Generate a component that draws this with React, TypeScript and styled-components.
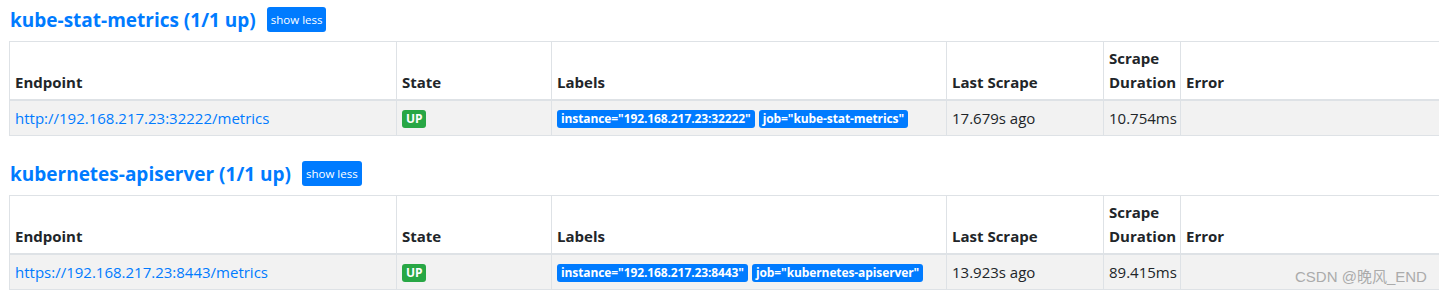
import styled, {createGlobalStyle} from 'styled-components';

const GlobalStyle = createGlobalStyle`
  body {
    margin: 0;
    background: #fff;
    font-family: "Open Sans", "Noto Sans", "Liberation Sans", sans-serif;
    color: #212529;
    overflow: hidden;
  }
`;

const Page = styled.div`
  position: relative;
  padding: 7px 0 0 9px;
  height: 293px;
  box-sizing: border-box;
`;

const Pool = styled.section`
  margin-bottom: 25px;
`;

const TitleRow = styled.div`
  display: flex;
  align-items: center;
  gap: 11px;
  height: 25px;
`;

const Title = styled.a`
  font-size: 19px;
  font-weight: 700;
  color: #007bff;
  text-decoration: none;
  padding-left: 1px;
`;

const SmallButton = styled.button`
  height: 25px;
  padding: 0 4px;
  border: none;
  border-radius: 3px;
  background: #007bff;
  color: #fff;
  font-family: inherit;
  font-size: 11.5px;
`;

const Table = styled.table`
  margin-top: 9px;
  width: 1430px;
  table-layout: fixed;
  border-collapse: collapse;
  font-size: 15px;
  line-height: 24px;

  th,
  td {
    border: 1px solid #dee2e6;
    text-align: left;
    overflow: hidden;
    white-space: nowrap;
  }

  th {
    padding: 4px 5px 5px;
    vertical-align: bottom;
    font-weight: 700;
    white-space: normal;
  }

  thead th {
    border-bottom-width: 2px;
  }

  td {
    padding: 5px;
    vertical-align: top;
    background: #f2f2f2;
  }
`;

const Endpoint = styled.a`
  color: #007bff;
  text-decoration: none;
`;

const Badge = styled.span<{$tone: 'success' | 'primary'}>`
  display: inline-block;
  margin-right: 4px;
  padding: 2px 4px;
  border-radius: 3px;
  font-size: 12px;
  font-weight: 700;
  line-height: 14px;
  letter-spacing: -0.1px;
  color: #fff;
  vertical-align: 1px;
  background: ${(p) => (p.$tone === 'success' ? '#28a745' : '#007bff')};
`;

const Watermark = styled.div`
  position: absolute;
  left: 1295px;
  top: 265px;
  font-family: "Liberation Sans", "Noto Sans CJK SC", sans-serif;
  font-size: 15px;
  color: #ababab;
`;

const columns = [387, 155, 395, 157, 77, 259];

const pools = [
  {
    name: 'kube-stat-metrics',
    endpoint: 'http://192.168.217.23:32222/metrics',
    labels: ['instance="192.168.217.23:32222"', 'job="kube-stat-metrics"'],
    lastScrape: '17.679s ago',
    duration: '10.754ms',
  },
  {
    name: 'kubernetes-apiserver',
    endpoint: 'https://192.168.217.23:8443/metrics',
    labels: ['instance="192.168.217.23:8443"', 'job="kubernetes-apiserver"'],
    lastScrape: '13.923s ago',
    duration: '89.415ms',
  },
];

function ScrapePool({pool}: {pool: (typeof pools)[number]}) {
  return (
    <Pool>
      <TitleRow>
        <Title href={`#${pool.name}`}>{pool.name} (1/1 up)</Title>
        <SmallButton type="button">show less</SmallButton>
      </TitleRow>
      <Table>
        <colgroup>
          {columns.map((w, i) => (
            <col key={i} style={{width: w}} />
          ))}
        </colgroup>
        <thead>
          <tr>
            <th>Endpoint</th>
            <th>State</th>
            <th>Labels</th>
            <th>Last Scrape</th>
            <th>Scrape Duration</th>
            <th>Error</th>
          </tr>
        </thead>
        <tbody>
          <tr>
            <td>
              <Endpoint href={pool.endpoint}>{pool.endpoint}</Endpoint>
            </td>
            <td>
              <Badge $tone="success">UP</Badge>
            </td>
            <td>
              {pool.labels.map((label) => (
                <Badge $tone="primary" key={label}>
                  {label}
                </Badge>
              ))}
            </td>
            <td>{pool.lastScrape}</td>
            <td>{pool.duration}</td>
            <td />
          </tr>
        </tbody>
      </Table>
    </Pool>
  );
}

export default function App() {
  return (
    <>
      <GlobalStyle />
      <Page>
        {pools.map((pool) => (
          <ScrapePool pool={pool} key={pool.name} />
        ))}
        <Watermark>CSDN @晚风_END</Watermark>
      </Page>
    </>
  );
}
